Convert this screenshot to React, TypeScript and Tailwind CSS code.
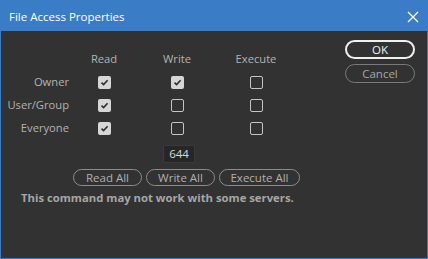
const Box = ({ checked }: { checked: boolean }) =>
  checked ? (
    <span className="flex h-[13px] w-[13px] items-center justify-center rounded-[2px] bg-[#d6d6d6]">
      <svg width="9" height="9" viewBox="0 0 9 9">
        <path d="M1.5 4.6 L3.6 6.6 L7.6 2.2" fill="none" stroke="#2e2e2e" strokeWidth="1.6" />
      </svg>
    </span>
  ) : (
    <span className="block h-[13px] w-[13px] rounded-[2px] border border-[#c4c4c4]" />
  );

const rows: [string, boolean, boolean, boolean][] = [
  ["Owner", true, true, false],
  ["User/Group", true, false, false],
  ["Everyone", true, false, false],
];

const PillButton = ({ label, w }: { label: string; w: string }) => (
  <button className={`${w} h-[17px] rounded-full border border-[#8c8c8c] text-[11.5px] leading-none text-[#b0b0b0]`}>
    {label}
  </button>
);

export default function App() {
  return (
    <div
      className="flex h-[259px] w-[428px] flex-col border border-t-0 border-[#3b7cc6] bg-[#323232]"
      style={{ fontFamily: '"Open Sans", "Noto Sans", sans-serif' }}
    >
      <div className="-mx-px flex h-[31px] shrink-0 items-center justify-between bg-[#3b7cc6] pl-[9px] pr-[9px] pt-[2px] text-white">
        <span className="text-[11.5px]">File Access Properties</span>
        <svg width="12" height="12" viewBox="0 0 12 12">
          <path d="M1 1 L11 11 M11 1 L1 11" stroke="#ffffff" strokeWidth="1.3" />
        </svg>
      </div>

      <div className="flex flex-1">
        <div className="flex flex-col pt-[17px]">
          <div className="grid grid-cols-[68px_70px_76px_82px] auto-rows-[23px] items-center text-[11.2px] text-[#b2b2b2]">
            <span />
            <span className="text-center">Read</span>
            <span className="text-center">Write</span>
            <span className="text-center">Execute</span>
            {rows.map(([name, r, w, x]) => (
              <div key={name} className="contents">
                <span className="text-right">{name}</span>
                <span className="flex justify-center"><Box checked={r} /></span>
                <span className="flex justify-center"><Box checked={w} /></span>
                <span className="flex justify-center"><Box checked={x} /></span>
              </div>
            ))}
          </div>

          <div className="mt-[5px] ml-[162px] flex h-[18px] w-[32px] items-center justify-center rounded-[2px] border border-[#3a3a3a] bg-[#262626] text-[11.5px] text-[#d8d8d8]">
            644
          </div>

          <div className="mt-[6px] ml-[72px] flex gap-[4px]">
            <PillButton label="Read All" w="w-[69px]" />
            <PillButton label="Write All" w="w-[69px]" />
            <PillButton label="Execute All" w="w-[81px]" />
          </div>

          <p className="mt-[4px] ml-[20px] text-[11.3px] font-bold text-[#a6a6a6]">
            This command may not work with some servers.
          </p>
        </div>

        <div className="ml-auto mr-[12px] mt-[9px] flex flex-col gap-[5px]">
          <button className="h-[19px] w-[70px] rounded-full border-2 border-[#f0f0f0] text-[11.5px] leading-none text-[#f0f0f0]">
            OK
          </button>
          <button className="h-[19px] w-[70px] rounded-full border border-[#7a7a7a] text-[11.5px] leading-none text-[#a8a8a8]">
            Cancel
          </button>
        </div>
      </div>
    </div>
  );
}
